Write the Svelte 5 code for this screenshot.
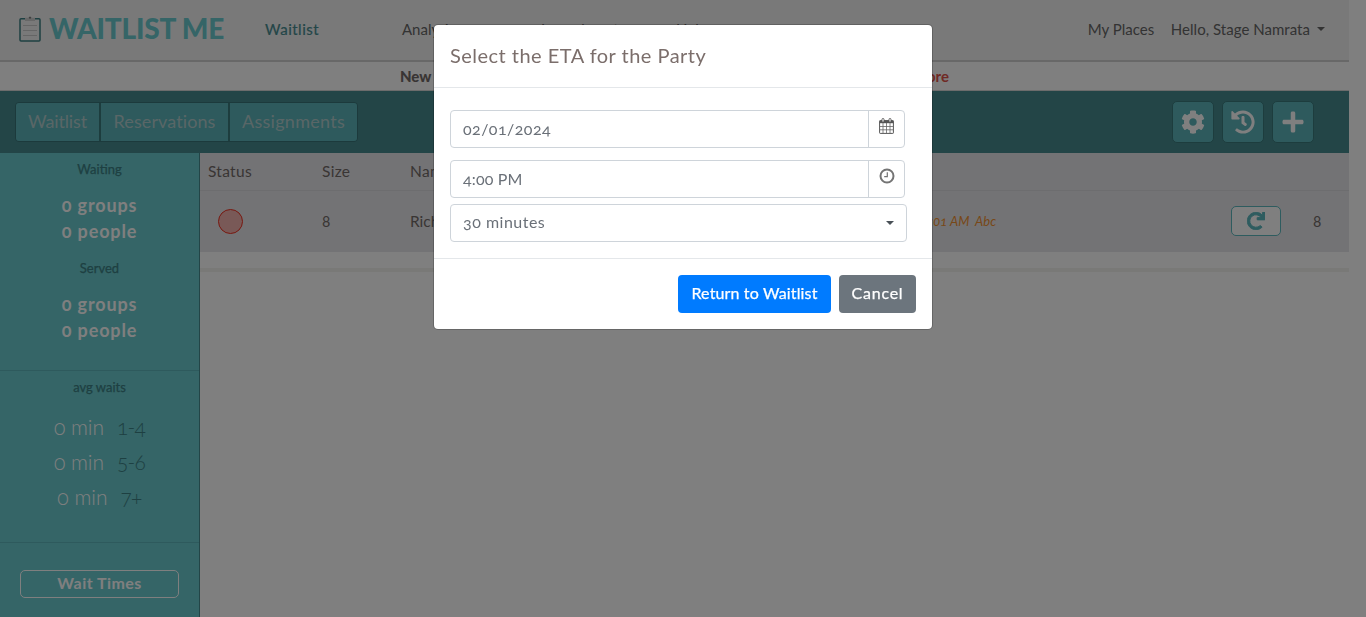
<script>
  const groups = ['Waiting', 'Served'];
  const waits = [
    { size: '1-4', min: 0 },
    { size: '5-6', min: 0 },
    { size: '7+', min: 0 }
  ];
</script>

<div class="page">
  <header class="nav">
    <div class="brand">
      <svg class="clip" width="22" height="26" viewBox="0 0 22 26">
        <rect x="1" y="2.700" width="20" height="22.300" rx="1" fill="none" stroke="#3c8084" stroke-width="1.500" />
        <path d="M6 1.8H9Q11-.8 13 1.8H16V5H6Z" fill="#cecece" />
        <circle cx="11" cy="1.8" r="1" fill="#777" />
        <path d="M4 9.500H18M4 14.500H18M4 19.500H18" stroke="#cacaca" stroke-width="1.200" />
      </svg>
      <span class="brand-name">WAITLIST ME</span>
    </div>
    <a class="link active" href="#waitlist">Waitlist</a>
    <a class="link analytics" href="#analytics">Analytics</a>
    <a class="link assignments" href="#support">Learn how to</a>
    <a class="link help" href="#help">Help</a>
    <div class="account">
      <span class="places">My Places</span>
      <span class="hello">Hello, Stage Namrata</span>
      <i class="caret"></i>
    </div>
  </header>

  <div class="notice"><b>New</b><strong>more</strong></div>

  <div class="toolbar">
    <div class="tabs">
      <button class="t1">Waitlist</button>
      <button class="t2">Reservations</button>
      <button class="t3">Assignments</button>
    </div>
    <div class="tools">
      <button aria-label="Settings">
        <svg width="24" height="24" viewBox="0 0 512 512" fill="#fff"><path d="M487.400 315.700l-42.600-24.600c4.300-23.200 4.300-47 0-70.200l42.600-24.600c4.900-2.800 7.100-8.600 5.500-14-11.100-35.600-30-67.800-54.700-94.600-3.800-4.100-10-5.100-14.800-2.300L380.800 110c-17.900-15.400-38.500-27.300-60.800-35.100V25.800c0-5.600-3.900-10.500-9.400-11.700-36.700-8.200-74.300-7.800-109.200 0-5.500 1.200-9.400 6.100-9.400 11.700V75c-22.200 7.900-42.800 19.800-60.800 35.100L88.700 85.500c-4.900-2.800-11-1.900-14.800 2.300-24.700 26.700-43.600 58.900-54.700 94.600-1.700 5.400.6 11.200 5.500 14L67.300 221c-4.300 23.200-4.300 47 0 70.200l-42.600 24.600c-4.900 2.800-7.100 8.600-5.500 14 11.100 35.600 30 67.800 54.700 94.600 3.800 4.100 10 5.100 14.800 2.300l42.600-24.600c17.900 15.400 38.500 27.300 60.800 35.100v49.200c0 5.600 3.900 10.500 9.400 11.700 36.700 8.200 74.300 7.800 109.200 0 5.500-1.200 9.400-6.100 9.400-11.700v-49.200c22.200-7.900 42.800-19.800 60.800-35.100l42.600 24.600c4.900 2.800 11 1.900 14.800-2.300 24.700-26.700 43.600-58.900 54.700-94.600 1.500-5.500-.7-11.300-5.600-14.100zM256 336c-44.100 0-80-35.900-80-80s35.900-80 80-80 80 35.900 80 80-35.900 80-80 80z" /></svg>
      </button>
      <button aria-label="History">
        <svg width="24" height="24" viewBox="0 0 512 512" fill="#fff"><path d="M504 255.531c.253 136.640-111.180 248.372-247.820 248.468-59.015.042-113.223-20.530-155.822-54.911-11.077-8.940-11.905-25.541-1.839-35.607l11.267-11.267c8.609-8.609 22.353-9.551 31.891-1.984C173.062 425.135 212.781 440 256 440c101.705 0 184-82.311 184-184 0-101.705-82.311-184-184-184-48.814 0-93.149 18.969-126.068 49.932l50.754 50.754c10.080 10.080 2.941 27.314-11.313 27.314H24c-8.837 0-16-7.163-16-16V38.627c0-14.254 17.234-21.393 27.314-11.314l49.372 49.372C129.209 34.136 189.552 8 256 8c136.810 0 247.747 110.780 248 247.531zm-180.912 78.784l9.823-12.630c8.138-10.463 6.253-25.542-4.210-33.679L288 256.349V152c0-13.255-10.745-24-24-24h-16c-13.255 0-24 10.745-24 24v135.651l65.409 50.874c10.463 8.137 25.541 6.253 33.679-4.210z" /></svg>
      </button>
      <button aria-label="Add">
        <svg width="22" height="24" viewBox="0 0 448 512" fill="#fff"><path d="M416 208H272V64c0-17.670-14.330-32-32-32h-32c-17.670 0-32 14.330-32 32v144H32c-17.670 0-32 14.330-32 32v32c0 17.670 14.330 32 32 32h144v144c0 17.670 14.330 32 32 32h32c17.670 0 32-14.330 32-32V304h144c17.670 0 32-14.330 32-32v-32c0-17.670-14.330-32-32-32z" /></svg>
      </button>
    </div>
  </div>

  <div class="content">
    <aside>
      <section class="counts">
        {#each groups as g}
          <div class="count">
            <h6>{g}</h6>
            <p>0 groups</p>
            <p>0 people</p>
          </div>
        {/each}
      </section>
      <section class="waits">
        <h6>avg waits</h6>
        {#each waits as w}
          <div class="wait"><span>{w.min} min</span><em>{w.size}</em></div>
        {/each}
      </section>
      <section class="times"><button>Wait Times</button></section>
    </aside>

    <main>
      <div class="row head">
        <span class="status">Status</span><span class="size">Size</span><span>Name</span>
      </div>
      <div class="row party">
        <span class="status"><i class="dot"></i></span>
        <span class="size">8</span>
        <span class="name">Richard</span>
        <span class="note">12:01 AM&nbsp; Abc</span>
        <button class="refresh" aria-label="Refresh">
          <svg width="18" height="18" viewBox="0 0 512 512" fill="#5cb8be" stroke="#5cb8be" stroke-width="26"><path d="M500.330 0h-47.410a12 12 0 0 0-12 12.570l4 82.760A247.420 247.420 0 0 0 256 8C119.340 8 7.900 119.530 8 256.190 8.100 393.070 119.100 504 256 504a247.100 247.100 0 0 0 166.180-63.910 12 12 0 0 0 .48-17.430l-34-34a12 12 0 0 0-16.380-.55A176 176 0 1 1 402.100 157.800l-101.530-4.870a12 12 0 0 0-12.570 12v47.410a12 12 0 0 0 12 12h200.330a12 12 0 0 0 12-12V12a12 12 0 0 0-12-12z" /></svg>
        </button>
        <span class="last">8</span>
      </div>
      <div class="rule"></div>
    </main>
  </div>
</div>

<div class="backdrop">
  <div class="modal">
    <h5>Select the ETA for the Party</h5>
    <div class="body">
      <div class="field">
        <span class="val date">02/01/2024</span>
        <span class="addon">
          <svg width="15" height="16" viewBox="0 0 15 16">
            <rect x=".6" y="2.600" width="13.800" height="12.800" rx=".6" fill="#fff" stroke="#555" stroke-width="1" />
            <path d="M.6 2.600H14.400V5.200H.6Z" fill="#555" />
            <path d="M4 5V15M7.500 5V15M11 5V15M1 8.500H14M1 11.800H14" stroke="#666" stroke-width=".8" />
            <rect x="3" y=".5" width="2" height="3.600" rx=".9" fill="#fff" stroke="#555" stroke-width=".9" />
            <rect x="10" y=".5" width="2" height="3.600" rx=".9" fill="#fff" stroke="#555" stroke-width=".9" />
          </svg>
        </span>
      </div>
      <div class="field">
        <span class="val time">4:00 PM</span>
        <span class="addon">
          <svg width="16" height="16" viewBox="0 0 16 16" fill="none" stroke="#747474">
            <circle cx="8" cy="8" r="6.500" stroke-width="2" />
            <path d="M8.300 4.200V8.700H5.200" stroke-width="1.200" />
          </svg>
        </span>
      </div>
      <div class="select"><span>30 minutes</span><i class="caret"></i></div>
    </div>
    <footer>
      <button class="primary">Return to Waitlist</button>
      <button class="cancel">Cancel</button>
    </footer>
  </div>
</div>

<style>
  :global(body) {
    background: #fff;
    overflow: hidden;
  }
  .page, .backdrop {
    font-family: Lato, "Open Sans", sans-serif;
    font-feature-settings: "onum";
    color: #736b69;
  }
  * { box-sizing: border-box; }
  button {
    font: inherit;
    font-feature-settings: inherit;
    padding: 0;
    margin: 0;
    display: flex;
    align-items: center;
    justify-content: center;
  }
  h5, h6, p { margin: 0; }
  .page { width: 1349px; height: 617px; overflow: hidden; }

  .nav {
    height: 62px;
    background: #f3f3f3;
    border-bottom: 2px solid #d0d0d0;
    display: flex;
    align-items: center;
    font-size: 15px;
    white-space: nowrap;
  }
  .nav .link, .nav .account { padding-bottom: 2px; }
  .brand { width: 265px; padding-left: 19px; display: flex; align-items: center; }
  .clip { flex: none; margin-bottom: 3px; }
  .brand-name {
    margin: 0 0 4px 8px;
    font-size: 28px;
    font-weight: 900;
    letter-spacing: -.2px;
    color: #6acace;
  }
  .link { text-decoration: none; color: #666; }
  .active { width: 137px; color: #468c90; letter-spacing: .5px; -webkit-text-stroke: .2px #468c90; }
  .analytics { width: 139px; }
  .assignments { width: 135px; }
  .account { margin-left: auto; display: flex; align-items: center; padding-right: 24px; color: #666; }
  .places { width: 83px; }
  .hello { letter-spacing: .03px; }
  .caret {
    border: 4px solid transparent;
    border-top-color: currentColor;
    border-bottom: 0;
  }
  .account .caret { margin-left: 7px; margin-bottom: 1px; }

  .notice {
    height: 29px;
    border-bottom: 1px solid #d8d8d8;
    padding: 0 400px;
    display: flex;
    justify-content: space-between;
    align-items: center;
    font-size: 15px;
    color: #736b69;
  }
  .notice b { font-weight: 900; }
  .notice strong { color: #e0544a; }

  .toolbar {
    height: 62px;
    background: #468a8e;
    padding: 0 35px 0 15px;
    display: flex;
    align-items: center;
    justify-content: space-between;
  }
  .tabs { display: flex; border: 1px solid #387478; border-radius: 4px; overflow: hidden; }
  .tabs button {
    height: 38px;
    border: 0;
    border-right: 2px solid #3b7a7d;
    background: #5cb5ba;
    color: #b3cdce;
    font-size: 18px;
    padding-bottom: 3px;
  }
  .tabs .t1 { width: 85px; letter-spacing: -.15px; }
  .tabs .t2 { width: 129px; letter-spacing: .1px; }
  .tabs .t3 { width: 127px; border: 0; letter-spacing: .28px; }
  .tools { display: flex; gap: 8px; }
  .tools button {
    width: 42px;
    height: 42px;
    border: 1px solid #3b7a7d;
    border-radius: 5px;
    background: #5cb5ba;
  }

  .content { height: 464px; display: flex; }
  aside {
    width: 200px;
    background: #6acace;
    border-right: 1px solid #468a8e;
    text-align: center;
  }
  h6 { font-size: 13px; line-height: 16px; font-weight: 400; color: #3c8084; -webkit-text-stroke: .25px #3c8084; }
  .counts { height: 218px; border-bottom: 1px solid #5cb5ba; padding-top: 8px; }
  .count { height: 98.500px; }
  .count h6 { margin-bottom: 15px; }
  .count p { font-size: 18px; line-height: 26px; font-weight: 700; letter-spacing: .85px; color: #fff; }
  .waits { height: 172px; border-bottom: 1px solid #5cb5ba; padding-top: 8px; }
  .waits h6 { margin-bottom: 14px; }
  .wait { height: 35px; display: flex; justify-content: center; align-items: center; gap: 13px; font-size: 21px; font-weight: 300; color: #fff; }
  .wait em { font-style: normal; color: #3c8084; letter-spacing: -.8px; }
  .times { padding: 27px 20px 0; }
  .times button {
    width: 159px;
    height: 28px;
    border: 1px solid #fff;
    border-radius: 5px;
    background: none;
    color: #fff;
    font-size: 16px;
    font-weight: 700;
    letter-spacing: .45px;
    padding-bottom: 3px;
  }

  main { flex: 1; }
  .row { display: flex; align-items: center; padding: 0 0 2px 8px; font-size: 15.500px; background: #e7e7eb; }
  .head { height: 38px; border-bottom: 1px solid #dadade; letter-spacing: .3px; }
  .party { height: 61px; padding-bottom: 1px; }
  .status { width: 114px; }
  .size { width: 88px; }
  .dot { display: block; width: 25px; height: 25px; margin: 1px 0 0 10px; border: 1px solid #f03020; border-radius: 50%; background: #f2b2ae; }
  .name { width: 506px; }
  .note { font-size: 13px; font-style: italic; color: #f09030; width: 315px; letter-spacing: 0; }
  .refresh { width: 50px; height: 30px; border: 1px solid #5cb8be; border-radius: 5px; background: #fff; }
  .last { margin-left: 32px; }
  .rule { margin-top: 16px; height: 4px; background: #f3f3ee; }

  .backdrop {
    position: fixed;
    inset: 0;
    background: rgba(0, 0, 0, .5);
    display: flex;
    justify-content: center;
    align-items: flex-start;
    padding-top: 24px;
  }
  .modal {
    width: 500px;
    height: 306px;
    background: #fff;
    background-clip: padding-box;
    border: 1px solid rgba(0, 0, 0, .2);
    border-radius: 5px;
  }
  h5 {
    height: 63px;
    border-bottom: 1px solid #e4e7ea;
    padding: 0 16px 2px;
    display: flex;
    align-items: center;
    font-size: 20px;
    font-weight: 400;
    letter-spacing: .48px;
    color: #7b6e6b;
  }
  .body { height: 171px; border-bottom: 1px solid #e4e7ea; padding: 22px 16px 0; font-size: 16px; color: #6a7078; }
  .field { width: 455px; height: 38px; margin-bottom: 12px; display: flex; border: 1px solid #ced4da; border-radius: 4px; }
  .field + .field { margin-bottom: 6px; }
  .val { width: 418px; padding-left: 12px; line-height: 35px; border-right: 1px solid #ced4da; }
  .date { letter-spacing: .45px; }
  .time { letter-spacing: .15px; }
  .addon { flex: 1; display: flex; justify-content: center; padding-top: 7px; }
  .select {
    width: 457px;
    height: 38px;
    padding: 0 12px;
    display: flex;
    align-items: center;
    justify-content: space-between;
    border: 1px solid #ced4da;
    border-radius: 4px;
    letter-spacing: .5px;
  }
  .select span { padding-bottom: 3px; }
  .select .caret { color: #495057; }
  footer { display: flex; justify-content: flex-end; gap: 8px; padding: 16px 16px 0; font-size: 16px; color: #fff; }
  footer button { height: 38px; border: 0; border-radius: 4px; color: #fff; -webkit-text-stroke: .25px #fff; padding-bottom: 3px; }
  .primary { width: 153px; background: #007bff; letter-spacing: .14px; }
  .cancel { width: 77px; background: #6c757d; letter-spacing: .75px; }
</style>
